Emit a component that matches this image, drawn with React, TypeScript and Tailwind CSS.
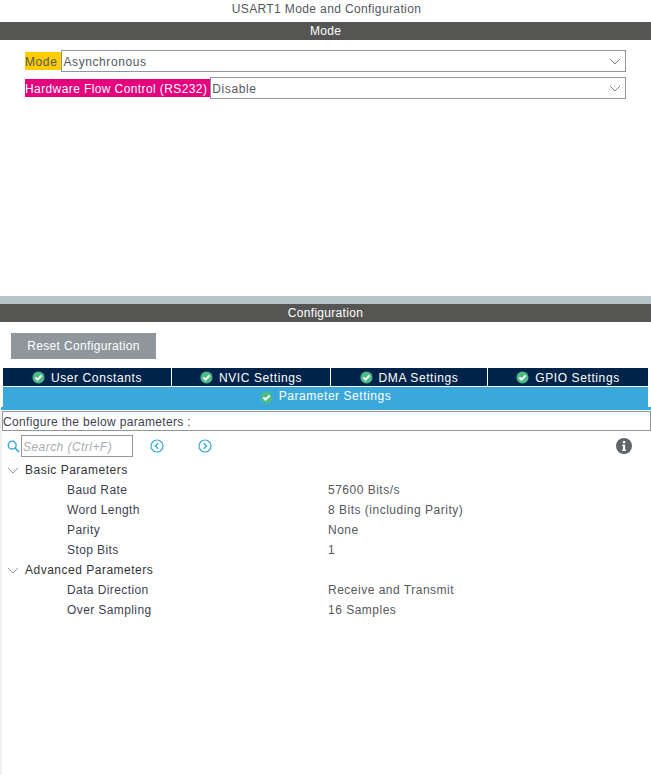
const font = { fontFamily: '"Liberation Sans", Arial, sans-serif' };

function Check() {
  return (
    <svg width="13" height="13" viewBox="0 0 13 13" className="shrink-0">
      <circle cx="6.5" cy="6.5" r="6" fill="#4cbc86" />
      <path d="M3.4 6.5 L5.6 8.7 L9.6 4.5" fill="none" stroke="#fff" strokeWidth="1.9" />
    </svg>
  );
}

function Chevron({ color = "#7a8288", w = 12 }: { color?: string; w?: number }) {
  return (
    <svg width={w} height="7" viewBox="0 0 12 7" className="shrink-0">
      <path d="M1 1 L6 6 L11 1" fill="none" stroke={color} strokeWidth="1" />
    </svg>
  );
}

function Bar({ children }: { children: string }) {
  return (
    <div className="h-[18px] bg-[#555654] text-white text-center text-[12px] leading-[18px] tracking-[0.3px]">
      {children}
    </div>
  );
}

function SelectRow({ label, value, labelClass }: { label: string; value: string; labelClass: string }) {
  return (
    <div className="flex items-center h-[22px] ml-[25px] mr-[25px]">
      <div className={`h-[18px] leading-[20px] text-[12px] whitespace-nowrap ${labelClass}`}>{label}</div>
      <div className="flex-1 h-[22px] border border-[#8f979d] flex items-center justify-between pl-[1px] pr-[4px] text-[12px] tracking-[0.6px] text-[#54585c]">
        <span className="pt-[2px]">{value}</span>
        <Chevron />
      </div>
    </div>
  );
}

function Tab({ label, className }: { label: string; className: string }) {
  return (
    <div className={`h-[18px] bg-[#002349] text-white text-[12px] tracking-[0.6px] flex items-center justify-center gap-[6px] ${className}`}>
      <Check />
      <span className="pt-[2px]">{label}</span>
    </div>
  );
}

function Group({ label }: { label: string }) {
  return (
    <div className="h-[20px] flex items-center text-[12px] tracking-[0.5px] text-[#333]">
      <span className="w-[25px] pl-[7px] flex"><Chevron color="#8f979d" /></span>
      <span>{label}</span>
    </div>
  );
}

function Param({ name, value }: { name: string; value: string }) {
  return (
    <div className="h-[20px] flex items-center text-[12px]">
      <span className="ml-[67px] w-[261px] text-[#3d3f4f] tracking-[0.4px]">{name}</span>
      <span className="text-[#54585c] tracking-[0.5px]">{value}</span>
    </div>
  );
}

export default function App() {
  return (
    <div style={font} className="w-[651px] h-[775px] bg-white overflow-hidden flex flex-col">
      <div className="h-[22px] pl-[2px] text-center text-[12px] leading-[18px] tracking-[0.38px] text-[#54585c]">
        USART1 Mode and Configuration
      </div>
      <Bar>Mode</Bar>
      <div className="h-[256px] pt-[10px] flex flex-col gap-[5px]">
        <SelectRow label="Mode" value="Asynchronous" labelClass="bg-[#ffcc00] text-[#54585c] tracking-[0.6px] pr-[4px]" />
        <SelectRow label="Hardware Flow Control (RS232)" value="Disable" labelClass="bg-[#e6007e] text-white tracking-[0.4px] pr-[3px]" />
      </div>
      <div className="h-[8px] bg-[#b8c4cb]" />
      <Bar>Configuration</Bar>
      <div className="pt-[11px] pl-[11px]">
        <div className="w-[145px] h-[26px] bg-[#8f979d] text-white text-[12px] tracking-[0.35px] flex items-center justify-center">
          <span>Reset Configuration</span>
        </div>
      </div>
      <div className="mt-[9px] mx-[3px] flex gap-[1px] h-[18px]">
        <Tab label="User Constants" className="w-[168px]" />
        <Tab label="NVIC Settings" className="w-[158px]" />
        <Tab label="DMA Settings" className="w-[156px]" />
        <Tab label="GPIO Settings" className="flex-1" />
      </div>
      <div className="mt-[1px] mx-[3px] h-[20px] bg-[#39a9dc] text-white text-[12px] tracking-[0.55px] flex items-center justify-center gap-[6px]">
        <Check />
        <span className="pb-[2px]">Parameter Settings</span>
      </div>
      <div className="ml-[1px] h-[3px] bg-[#39a9dc]" />
      <div className="flex-1 flex flex-col border-l-2 border-[#f0f0f0]">
        <div className="mt-[1px] h-[20px] border border-[#8f979d] flex items-center text-[12px] tracking-[0.33px] text-[#3d3f4f]">
          <span className="pt-[2px]">Configure the below parameters :</span>
        </div>
        <div className="h-[22px] mt-[4px] flex items-center">
          <svg width="13" height="13" viewBox="0 0 13 13" className="ml-[5px] mr-[1px] shrink-0">
            <circle cx="5.2" cy="5.2" r="3.9" fill="none" stroke="#39a9dc" strokeWidth="1.5" />
            <path d="M8 8 L12 12" stroke="#39a9dc" strokeWidth="1.7" />
          </svg>
          <div className="w-[112px] h-[22px] border border-[#8f979d] flex items-center pl-[1px] text-[12px] italic tracking-[0.45px] text-[#a8adb1]">
            <span className="pt-[2px]">Search (Ctrl+F)</span>
          </div>
          <svg width="14" height="14" viewBox="0 0 14 14" className="ml-[17px] shrink-0">
            <circle cx="7" cy="7" r="6" fill="none" stroke="#39a9dc" strokeWidth="1.2" />
            <path d="M8.2 4.2 L5.4 7 L8.2 9.8" fill="none" stroke="#39a9dc" strokeWidth="1.3" />
          </svg>
          <svg width="14" height="14" viewBox="0 0 14 14" className="ml-[34px] shrink-0">
            <circle cx="7" cy="7" r="6" fill="none" stroke="#39a9dc" strokeWidth="1.2" />
            <path d="M5.8 4.2 L8.6 7 L5.8 9.8" fill="none" stroke="#39a9dc" strokeWidth="1.3" />
          </svg>
          <svg width="16" height="16" viewBox="0 0 16 16" className="ml-[404px] shrink-0">
            <circle cx="8" cy="8" r="8" fill="#616569" />
            <rect x="6.9" y="3" width="2.3" height="2.3" fill="#fff" />
            <path d="M6.2 6.7 H9.1 V11.6 H10 V13 H6.2 V11.6 H7 V8 H6.2 Z" fill="#fff" />
          </svg>
        </div>
        <div className="mt-[3px] -ml-[2px]">
          <Group label="Basic Parameters" />
          <Param name="Baud Rate" value="57600 Bits/s" />
          <Param name="Word Length" value="8 Bits (including Parity)" />
          <Param name="Parity" value="None" />
          <Param name="Stop Bits" value="1" />
          <Group label="Advanced Parameters" />
          <Param name="Data Direction" value="Receive and Transmit" />
          <Param name="Over Sampling" value="16 Samples" />
        </div>
      </div>
    </div>
  );
}
